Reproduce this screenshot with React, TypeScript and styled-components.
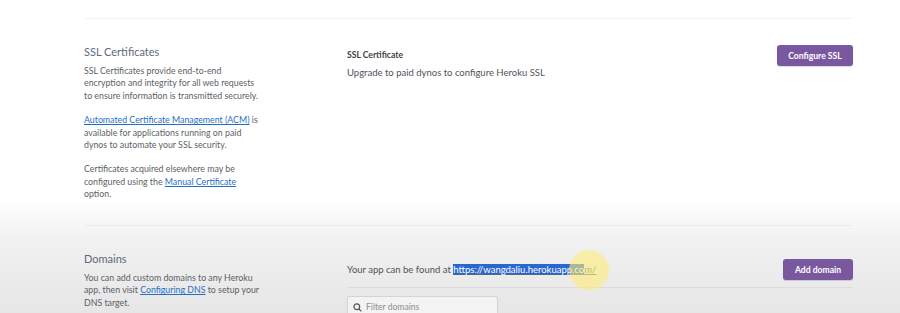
import React from "react";
import styled, { createGlobalStyle } from "styled-components";

const Global = createGlobalStyle`
  html, body { margin: 0; padding: 0; height: 100%; }
  body {
    background: linear-gradient(to bottom, #ffffff 0px, #ffffff 200px, #f1f1f1 240px, #e6e6e6 313px);
    font-family: Lato, "Open Sans", sans-serif;
    color: #3f3f44;
    overflow: hidden;
  }
`;

const Page = styled.div`
  margin-left: 84px;
  width: 769px;
  padding-top: 18px;
`;

const Rule = styled.div<{ $shade?: string }>`
  height: 1px;
  background: ${(p) => p.$shade || "#f4f4f4"};
`;

const Section = styled.section<{ $h?: number }>`
  display: grid;
  grid-template-columns: 263px 1fr;
  padding-top: 26px;
  ${(p) => (p.$h ? `height: ${p.$h}px;` : "")}
  box-sizing: border-box;
`;

const Aside = styled.div`
  display: flex;
  flex-direction: column;
`;

const Title = styled.h3`
  margin: 0 0 6px;
  font-size: 11px;
  line-height: 14px;
  font-weight: 400;
  color: #5d6a7d;
`;

const Para = styled.p`
  margin: 0 0 12px;
  font-size: 8.8px;
  line-height: 12.4px;
  color: #5c5f66;
  white-space: nowrap;
`;

const Link = styled.a`
  color: #1f6fc4;
  text-decoration: underline;
`;

const Main = styled.div`
  display: flex;
  flex-direction: column;
`;

const Row = styled.div<{ $align?: string }>`
  display: flex;
  justify-content: space-between;
  align-items: ${(p) => p.$align || "flex-start"};
`;

const Stack = styled.div`
  display: flex;
  flex-direction: column;
  padding-top: 4px;
`;

const Label = styled.div`
  font-size: 8.6px;
  line-height: 12px;
  font-weight: 700;
  color: #3f3f44;
  margin-bottom: 5px;
`;

const Text = styled.div`
  font-size: 9.5px;
  line-height: 13px;
  color: #50525a;
`;

const Button = styled.button<{ $w: number }>`
  width: ${(p) => p.$w}px;
  height: 21px;
  border: none;
  border-radius: 3px;
  background: #79589f;
  color: #ffffff;
  font-family: Lato, "Open Sans", sans-serif;
  font-weight: 700;
  font-size: 8.6px;
  padding: 0;
  box-shadow: 0 1px 1px rgba(0, 0, 0, 0.15);
`;

const AppRow = styled(Row)`
  padding-top: 7px;
  padding-bottom: 7px;
  border-bottom: 1px solid #dcdcdc;
`;

const UrlWrap = styled.span`
  position: relative;
`;

const Url = styled.a`
  color: #55657a;
  text-decoration: underline;
`;

const Selected = styled.span`
  background: #2a66d0;
  color: #ffffff;
`;

const Halo = styled.span`
  position: absolute;
  left: 116px;
  top: -14px;
  width: 40px;
  height: 40px;
  border-radius: 50%;
  background: rgba(255, 236, 120, 0.6);
  pointer-events: none;
`;

const Filter = styled.div`
  margin-top: 8px;
  width: 151px;
  height: 22px;
  box-sizing: border-box;
  border: 1px solid #d4d4d6;
  border-radius: 2px;
  background: #f3f3f3;
  display: flex;
  align-items: center;
  gap: 4px;
  padding-left: 5px;
  font-size: 8.6px;
  color: #8a8d93;
`;

export default function App() {
  return (
    <>
      <Global />
      <Page>
        <Rule />
        <Section $h={206}>
          <Aside>
            <Title>SSL Certificates</Title>
            <Para>
              SSL Certificates provide end-to-end
              <br />
              encryption and integrity for all web requests
              <br />
              to ensure information is transmitted securely.
            </Para>
            <Para>
              <Link>Automated Certificate Management (ACM)</Link> is
              <br />
              available for applications running on paid
              <br />
              dynos to automate your SSL security.
            </Para>
            <Para>
              Certificates acquired elsewhere may be
              <br />
              configured using the <Link>Manual Certificate</Link>
              <br />
              option.
            </Para>
          </Aside>
          <Main>
            <Row>
              <Stack>
                <Label>SSL Certificate</Label>
                <Text>Upgrade to paid dynos to configure Heroku SSL</Text>
              </Stack>
              <Button $w={76}>Configure SSL</Button>
            </Row>
          </Main>
        </Section>
        <Rule $shade="#ececec" />
        <Section>
          <Aside>
            <Title>Domains</Title>
            <Para>
              You can add custom domains to any Heroku
              <br />
              app, then visit <Link>Configuring DNS</Link> to setup your
              <br />
              DNS target.
            </Para>
          </Aside>
          <Main>
            <AppRow $align="center">
              <Text>
                Your app can be found at{" "}
                <UrlWrap>
                  <Url>
                    <Selected>https://wangdaliu.herokuapp.co</Selected>m/
                  </Url>
                  <Halo />
                </UrlWrap>
              </Text>
              <Button $w={70}>Add domain</Button>
            </AppRow>
            <Filter>
              <svg width="9" height="9" viewBox="0 0 10 10" fill="none" stroke="#55585f" strokeWidth="1.4">
                <circle cx="4.2" cy="4.2" r="3.2" />
                <line x1="6.6" y1="6.6" x2="9.3" y2="9.3" />
              </svg>
              Filter domains
            </Filter>
          </Main>
        </Section>
      </Page>
    </>
  );
}
